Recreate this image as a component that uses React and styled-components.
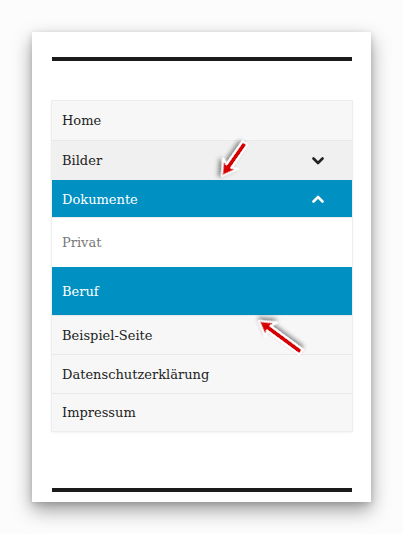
import React from 'react'
import styled, { createGlobalStyle } from 'styled-components'

const GlobalStyle = createGlobalStyle`
  html, body {
    margin: 0;
    padding: 0;
    background: #fcfcfc;
  }
`

const items = [
  { label: 'Home', tone: 'light', h: 39 },
  { label: 'Bilder', tone: 'grey', caret: 'down', h: 40 },
  { label: 'Dokumente', tone: 'blue', caret: 'up', h: 37 },
  { label: 'Privat', tone: 'white', h: 50 },
  { label: 'Beruf', tone: 'blue', h: 48 },
  { label: 'Beispiel-Seite', tone: 'light', h: 39 },
  { label: 'Datenschutzerklärung', tone: 'light', h: 39 },
  { label: 'Impressum', tone: 'light', h: 38 },
]

const Caret = ({ dir }) => (
  <svg width="12" height="8" viewBox="0 0 12 8">
    <path
      d={dir === 'down' ? 'M1.5 1.5 L6 6 L10.5 1.5' : 'M1.5 6.5 L6 2 L10.5 6.5'}
      fill="none"
      stroke="currentColor"
      strokeWidth="2.6"
      strokeLinecap="round"
      strokeLinejoin="round"
    />
  </svg>
)

const Arrow = ({ x1, y1, x2, y2 }) => {
  const a = Math.atan2(y2 - y1, x2 - x1)
  const len = Math.hypot(x2 - x1, y2 - y1)
  const deg = (a * 180) / Math.PI
  return (
    <g transform={`translate(${x1} ${y1}) rotate(${deg})`} filter="url(#ds)">
      <path
        d={`M0 -3 L${len - 12} -3 L${len - 15} -9 L${len} 0 L${len - 15} 9 L${len - 12} 3 L0 3 Z`}
        fill="#d60000"
        stroke="#fff"
        strokeWidth="1.8"
        strokeLinejoin="round"
      />
    </g>
  )
}

export default function App() {
  return (
    <>
      <GlobalStyle />
      <Page>
        <Card>
          <Rule />
          <Menu>
            {items.map((it) => (
              <Item key={it.label} tone={it.tone} h={it.h}>
                <span>{it.label}</span>
                {it.caret && (
                  <CaretBox>
                    <Caret dir={it.caret} />
                  </CaretBox>
                )}
              </Item>
            ))}
          </Menu>
          <Spacer />
          <Rule />
        </Card>
        <Overlay width="403" height="534" viewBox="0 0 403 534">
          <defs>
            <filter id="ds" x="-40" y="-40" width="500" height="600" filterUnits="userSpaceOnUse">
              <feDropShadow dx="2" dy="2.5" stdDeviation="2" floodColor="#000" floodOpacity="0.45" />
            </filter>
          </defs>
          <Arrow x1={245} y1={143} x2={222} y2={176} />
          <Arrow x1={301} y1={352} x2={259} y2={321} />
        </Overlay>
      </Page>
    </>
  )
}

const Page = styled.div`
  position: relative;
  width: 403px;
  height: 534px;
  padding: 32px 32px 0 32px;
  box-sizing: border-box;
`

const Card = styled.div`
  width: 339px;
  height: 470px;
  background: #fff;
  box-sizing: border-box;
  padding: 25px 19px 10px 20px;
  display: flex;
  flex-direction: column;
  box-shadow: 0 8px 18px rgba(0, 0, 0, 0.38), 0 2px 6px rgba(0, 0, 0, 0.15);
`

const Rule = styled.div`
  height: 4px;
  background: #1b1b1b;
  flex-shrink: 0;
`

const Menu = styled.ul`
  list-style: none;
  margin: 40px 0 0 0;
  padding: 0;
  box-shadow: 0 0 0 1px #ededed, 0 1px 3px rgba(0, 0, 0, 0.1);
  font-family: 'DejaVu Serif', 'Liberation Serif', serif;
  font-size: 13px;
`

const tones = {
  light: { bg: '#f7f7f7', fg: '#222222' },
  grey: { bg: '#f0f0f0', fg: '#222222' },
  white: { bg: '#ffffff', fg: '#777777' },
  blue: { bg: '#0091c2', fg: '#ffffff' },
}

const Item = styled.li`
  display: flex;
  align-items: center;
  justify-content: space-between;
  box-sizing: border-box;
  height: ${(p) => p.h}px;
  padding: 0 28px 0 10px;
  background: ${(p) => tones[p.tone].bg};
  color: ${(p) => tones[p.tone].fg};
  border-top: 1px solid ${(p) => (p.tone === 'blue' ? tones.blue.bg : '#e9e9e9')};
  &:first-child {
    border-top: none;
  }
`

const CaretBox = styled.span`
  display: flex;
  align-items: center;
`

const Spacer = styled.div`
  flex: 1;
`

const Overlay = styled.svg`
  position: absolute;
  left: 0;
  top: 0;
  pointer-events: none;
`
